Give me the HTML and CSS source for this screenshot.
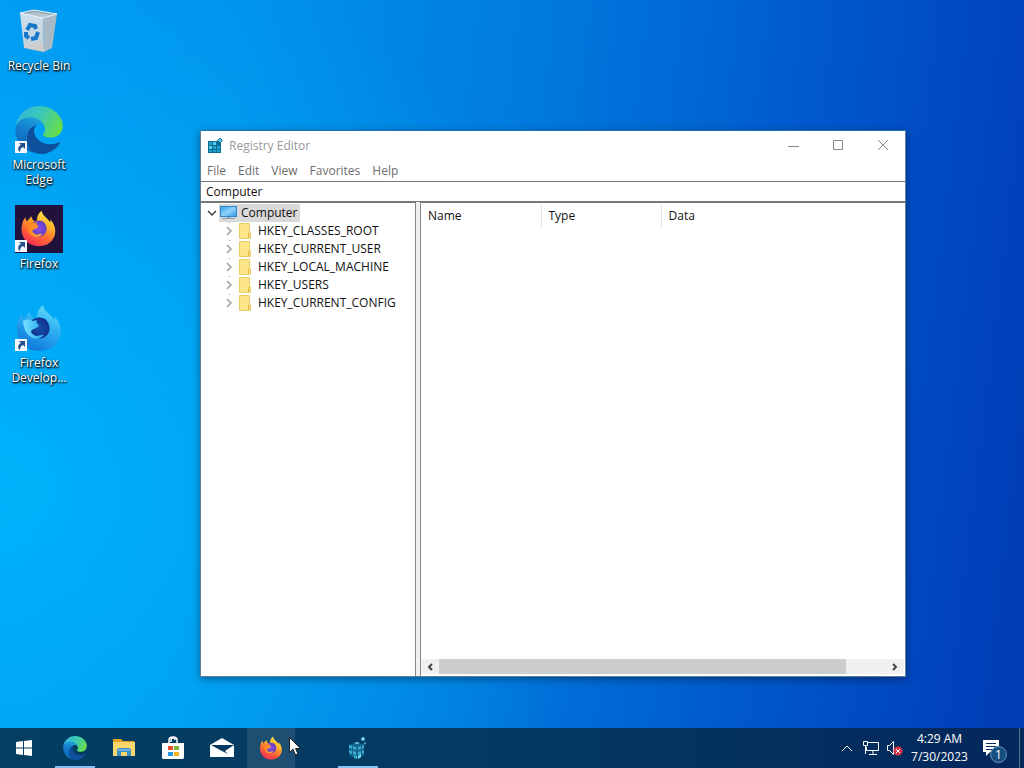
FILE: index.html
```
<!DOCTYPE html>
<html lang="en">

<head>
	<meta charset="UTF-8">
	<title>Desktop</title>
	<link rel="stylesheet" href="styles.css">
</head>

<body>
	<svg class="defs" aria-hidden="true">
		<defs>
			<linearGradient id="edgeDark" x1="0" x2="1"><stop offset="0" stop-color="#0c4f9c"/><stop offset="1" stop-color="#11519b"/></linearGradient>
			<linearGradient id="edgeMid" x1="0.6" y1="0" x2="0.3" y2="1"><stop offset="0" stop-color="#1ea6dc"/><stop offset="0.4" stop-color="#1580d0"/><stop offset="1" stop-color="#0d5dae"/></linearGradient>
			<linearGradient id="edgeTop" x1="0" y1="0.2" x2="1" y2="0.6"><stop offset="0" stop-color="#31b5e0"/><stop offset="0.5" stop-color="#3cc9b4"/><stop offset="1" stop-color="#67dd48"/></linearGradient>
			<linearGradient id="fire" x1="0.8" y1="0" x2="0.3" y2="1"><stop offset="0" stop-color="#fff04a"/><stop offset="0.35" stop-color="#ffb52c"/><stop offset="0.65" stop-color="#ff6b30"/><stop offset="1" stop-color="#f52a5b"/></linearGradient>
			<linearGradient id="fireHead" x1="0" y1="0" x2="1" y2="0.4"><stop offset="0" stop-color="#ff7a24"/><stop offset="1" stop-color="#ffa22c"/></linearGradient>
			<radialGradient id="globe"><stop offset="0" stop-color="#8a4be8"/><stop offset="1" stop-color="#6241c4"/></radialGradient>
			<linearGradient id="ice" x1="0.8" y1="0" x2="0.3" y2="1"><stop offset="0" stop-color="#6fe4fb"/><stop offset="0.4" stop-color="#30b2f2"/><stop offset="1" stop-color="#0d76dc"/></linearGradient>
			<linearGradient id="iceHead" x1="0" x2="1"><stop offset="0" stop-color="#77e2ff"/><stop offset="1" stop-color="#23a4ed"/></linearGradient>
			<radialGradient id="iceGlobe"><stop offset="0" stop-color="#164fae"/><stop offset="1" stop-color="#12308b"/></radialGradient>
			<linearGradient id="binFront" x1="0" y1="0" x2="0" y2="1"><stop offset="0" stop-color="#cfdfea"/><stop offset="0.7" stop-color="#c3d3e0"/><stop offset="1" stop-color="#d9c9c4"/></linearGradient>
			<linearGradient id="screen" x1="0" y1="0" x2="1" y2="1"><stop offset="0" stop-color="#3aa5ea"/><stop offset="0.5" stop-color="#8ed1fa"/><stop offset="1" stop-color="#3b9fe5"/></linearGradient>
		</defs>
		<symbol id="edge" viewBox="0 0 256 259">
			<path fill="url(#edgeMid)" d="M105.7 241.4a79.2 79.2 0 0 1-22.7-21.3 80.7 80.7 0 0 1 29.5-120c3.1-1.5 8.5-4 15.5-4a32.4 32.4 0 0 1 25.7 13 31.9 31.9 0 0 1 6.4 18.7c0-.2 24.4-79.6-80-79.6-43.9 0-80 41.6-80 78.2a130 130 0 0 0 12.1 56 128 128 0 0 0 156.4 67.1 75.6 75.6 0 0 1-62.8-8z"/>
			<path fill="url(#edgeDark)" d="M235.7 195.5a93.7 93.7 0 0 1-10.5 4.7 101.9 101.9 0 0 1-36 6.4c-47.3 0-88.5-32.5-88.5-74.3A31.5 31.5 0 0 1 117.1 105c-42.8 1.8-53.8 46.4-53.8 72.5 0 73.9 68.1 81.4 82.8 81.4 7.9 0 19.8-2.3 27-4.6l1.3-.4a128.3 128.3 0 0 0 66.6-52.8 4 4 0 0 0-5.3-5.6z"/>
			<path fill="url(#edgeTop)" d="M152.3 148.9c-.8 1-3.3 2.5-3.3 5.6 0 2.6 1.7 5.1 4.7 7.2 14.4 10 41.5 8.7 41.6 8.7a59.6 59.6 0 0 0 30.3-8.3A61.4 61.4 0 0 0 256 109.2c.3-22.4-8-37.3-11.3-43.9C223.5 23.8 177.7 0 128 0A128 128 0 0 0 0 126.2c.5-36.5 36.8-66 80-66 3.5 0 23.500.3 42 10 16.3 8.6 24.9 19 30.8 29.2 6.2 10.7 7.3 24.2 7.3 29.5s-2.7 13.4-7.8 20z"/>
		</symbol>
		<symbol id="fox" viewBox="0 0 48 48">
			<path class="flame" d="M28 1c1 5 4 7 7 10 2 2 3 3 4 5 1-1 1-2 0-4 6 6 8 14 6 21-3 9-11 14-21 14C11 47 2 37 2 25 2 18 4 13 7 9c0 3 1 4 2 6 2-3 4-5 6-7 0 3 2 6 5 7l2-2c0-5 2-9 6-12z"/>
			<path class="world" d="M16 17c4-4 12-5 16 0 4 6 3 12-1 15-4 4-12 3-15-1-3-5-3-10 0-14z"/>
			<path class="head" d="M8 17c4-2 7-2 10 0l4-1c-1 3 0 4 2 5-1 3-3 3-5 4-2 1-3 1-3 3 1 2 3 3 5 4 3 0 5-2 8-1-3 4-9 5-13 2-5-3-7-8-8-16z"/>
		</symbol>
		<symbol id="shortcut" viewBox="0 0 12 12">
			<path fill="#f4f8fc" d="M0 0h12v12H0z"/>
			<path fill="#24528f" d="M4 2h6v6L8 6C6 7 5 8 5 11 2 9 3 5 6 4z"/>
		</symbol>
		<symbol id="folder" viewBox="0 0 14 16">
			<path fill="#f9df7d" stroke="#ebcd66" d="M1.500.5h10v9h1v6h-11z"/>
			<path fill="#fde58c" d="M2 1h9v14H2z"/>
			<path fill="none" stroke="#dfb845" d="M10.500 10v5"/>
		</symbol>
		<symbol id="closed" viewBox="0 0 8 10">
			<path fill="none" stroke="#a0a0a0" stroke-width="1.500" d="M2 1l4 4-4 4"/>
		</symbol>
	</svg>

	<main class="desktop">
		<nav class="shortcuts" aria-label="Desktop icons">
			<a class="shortcut" href="#">
				<svg class="picture" viewBox="0 0 48 48">
					<path fill="#8da5b5" d="M5 6l14-3 23 4-4 4-10 1z"/>
					<path fill="#b4c5d1" d="M9 7l11-2 18 3-10 3z"/>
					<path fill="url(#binFront)" d="M5 6l23 5 1 34-20-4z"/>
					<path fill="#a9bac6" d="M28 11l14-4-5 34-8 4z"/>
					<path fill="none" stroke="#e9f4fa" d="M5 6l23 5 14-4-23-4z"/>
					<g fill="none" stroke="#1676cb" stroke-width="4">
						<path d="M12 23l3-5 5 1 1 3"/>
						<path d="M23 25l-2 6-5 1"/>
						<path d="M14 31l-3-2v-4"/>
					</g>
				</svg>
				<span>Recycle Bin</span>
			</a>
			<a class="shortcut" href="#">
				<svg class="picture" viewBox="0 0 48 48">
					<use href="#edge" width="48" height="48"/>
					<use href="#shortcut" y="35" width="12" height="12"/>
				</svg>
				<span>Microsoft Edge</span>
			</a>
			<a class="shortcut" href="#">
				<svg class="picture" viewBox="0 0 48 48">
					<path fill="#20123a" d="M0 0h48v48H0z"/>
					<use href="#fox" x="5" y="5" width="37" height="37"/>
					<use href="#shortcut" y="35" width="12" height="12"/>
				</svg>
				<span>Firefox</span>
			</a>
			<a class="shortcut" href="#">
				<svg class="picture developer" viewBox="0 0 48 48">
					<use href="#fox" width="48" height="48"/>
					<use href="#shortcut" y="35" width="12" height="12"/>
				</svg>
				<span>Firefox Develop...</span>
			</a>
		</nav>

		<section class="window" aria-label="Registry Editor">
			<header class="titlebar">
				<svg class="appIcon" viewBox="0 0 16 16">
					<path fill="#0b6c91" d="M1 3h11l2 2v10H1z"/>
					<path fill="#1fa3cf" d="M2 4h3v3H2zM6 4h3v3H6zM2 8h3v3H2zM6 8h3v3H6zM10 8h3v3h-3zM2 12h3v2H2zM6 12h3v2H6zM10 12h3v2h-3z"/>
					<path fill="#59cdea" d="M6 4h3v3H6zM2 8h3v3H2z"/>
					<path fill="#58cbe4" stroke="#0b6c91" d="M13 0l2.500 2.500L13 5l-2.500-2.500z"/>
				</svg>
				<h1>Registry Editor</h1>
				<button class="control" aria-label="Minimize"><svg viewBox="0 0 12 12"><path d="M1 6.500h11"/></svg></button>
				<button class="control" aria-label="Maximize"><svg viewBox="0 0 12 12"><path d="M1.500.5h9v9h-9z"/></svg></button>
				<button class="control" aria-label="Close"><svg viewBox="0 0 12 12"><path d="M1 0l10 10M11 0L1 10"/></svg></button>
			</header>
			<div class="menubar">
				<button>File</button>
				<button>Edit</button>
				<button>View</button>
				<button>Favorites</button>
				<button>Help</button>
			</div>
			<input class="address" type="text" value="Computer" aria-label="Address">
			<div class="panes">
				<div class="tree">
					<div class="root">
						<svg class="arrow" viewBox="0 0 10 8"><path fill="none" stroke="#404040" stroke-width="1.500" d="M1 2l4 4 4-4"/></svg>
						<a class="selected" href="#">
							<svg class="computer" viewBox="0 0 17 14">
								<path fill="#2c86c9" d="M0 0h17v11H0z"/>
								<path fill="url(#screen)" d="M1 1h15v9H1z"/>
								<path fill="#8fa3b1" d="M7 11h3v1h5v1H2v-1h5z"/>
							</svg>
							<span>Computer</span>
						</a>
					</div>
					<ul>
						<li><svg class="closed"><use href="#closed"/></svg><svg class="folder"><use href="#folder"/></svg>HKEY_CLASSES_ROOT</li>
						<li><svg class="closed"><use href="#closed"/></svg><svg class="folder"><use href="#folder"/></svg>HKEY_CURRENT_USER</li>
						<li><svg class="closed"><use href="#closed"/></svg><svg class="folder"><use href="#folder"/></svg>HKEY_LOCAL_MACHINE</li>
						<li><svg class="closed"><use href="#closed"/></svg><svg class="folder"><use href="#folder"/></svg>HKEY_USERS</li>
						<li><svg class="closed"><use href="#closed"/></svg><svg class="folder"><use href="#folder"/></svg>HKEY_CURRENT_CONFIG</li>
					</ul>
				</div>
				<div class="values">
					<table>
						<thead>
							<tr><th>Name</th><th>Type</th><th>Data</th></tr>
						</thead>
					</table>
					<div class="scrollbar">
						<button aria-label="Scroll left"><svg viewBox="0 0 8 8"><path d="M6 1L3 4l3 3"/></svg></button>
						<div class="track"><div class="thumb"></div></div>
						<button aria-label="Scroll right"><svg viewBox="0 0 8 8"><path d="M2 1l3 3-3 3"/></svg></button>
					</div>
				</div>
			</div>
		</section>
	</main>

	<footer class="taskbar">
		<button class="start" aria-label="Start">
			<svg width="16" height="16" viewBox="0 0 16 16"><path fill="#fff" d="M0 2l7-1v6.500H0zM8 1l8-1v7.500H8zM0 8.500h7V15l-7-1zM8 8.500h8V16l-8-1z"/></svg>
		</button>
		<div class="apps">
			<button class="running" aria-label="Microsoft Edge"><svg width="24" height="24"><use href="#edge"/></svg></button>
			<button aria-label="File Explorer">
				<svg width="22" height="20" viewBox="0 0 22 20">
					<path fill="#e3a11c" d="M0 1h8l2 2h11v5H0z"/>
					<path fill="#fbd66c" d="M0 4h22v14H0z"/>
					<path fill="#3f8cc5" d="M4 18v-7l2-1h10l2 1v7h-4v-4H8v4z"/>
					<path fill="#6eb3df" d="M5 11h12v2H5z"/>
				</svg>
			</button>
			<button aria-label="Microsoft Store">
				<svg width="24" height="24" viewBox="0 0 24 24">
					<path fill="none" stroke="#fff" stroke-width="1.500" d="M8 7V4c0-4 8-4 8 0v3M10 6V4c0-3 4-3 4 0"/>
					<path fill="#fff" d="M1 7h22v15l-1 1H2l-1-1z"/>
					<path fill="#e4512c" d="M7 10h5v4H7z"/>
					<path fill="#7eb834" d="M13 10h5v4h-5z"/>
					<path fill="#269bdc" d="M7 16h5v4H7z"/>
					<path fill="#f5b61b" d="M13 16h5v4h-5z"/>
				</svg>
			</button>
			<button aria-label="Mail">
				<svg width="24" height="20" viewBox="0 0 24 20">
					<path fill="#fff" d="M0 7l12-7 12 7v12H0z"/>
					<path fill="#063a63" d="M1 7h23l-9 6 3 3-8-4z"/>
				</svg>
			</button>
			<button class="hovered" aria-label="Firefox"><svg width="24" height="24"><use href="#fox"/></svg></button>
		</div>
		<div class="apps opened">
			<button class="running" aria-label="Registry Editor">
				<svg width="24" height="24" viewBox="0 0 24 24">
					<path fill="#16658a" d="M3 9l5-2 10 1v11l-7 4-8-4z"/>
					<path fill="#36abd3" d="M3 9l3 1v3l-3-1zM7 10l3 1v3l-3-1zM3 14l3 1v3l-3-1zM7 15l3 1v3l-3-1zM12 11l3-1v3l-3 1zM12 16l3-1v3l-3 1zM16 10l2-1v3l-2 1zM16 15l2-1v3l-2 1zM8 19l3 1v3l-3-1z"/>
					<path fill="#7cdcf2" d="M8 7l3-1 3 1-3 1zM12 20l3-2v3l-3 2zM15 2l3-1 1 3-3 1zM18 7l2-1-1 3z"/>
				</svg>
			</button>
		</div>
		<div class="tray">
			<button aria-label="Show hidden icons"><svg width="12" height="8" viewBox="0 0 12 8"><path d="M1 7l5-5 5 5"/></svg></button>
			<button aria-label="Network">
				<svg width="18" height="16" viewBox="0 0 18 16"><path d="M5 2.500h11.500v8H4.500V7M11 11v3M7 14.500h8M1.500 1.500h4v4h-4zM3.500 6v8"/></svg>
			</button>
			<button aria-label="Volume, muted">
				<svg width="18" height="16" viewBox="0 0 18 16">
					<path d="M1.500 5.500h2l4-4v13l-4-4h-2z"/>
					<circle cx="12" cy="11" r="4.500" fill="#d93445"/>
					<path d="M10 9l4 4M14 9l-4 4"/>
				</svg>
			</button>
			<button class="clock"><time>4:29 AM</time><time>7/30/2023</time></button>
			<button class="notifications" aria-label="Notifications">
				<svg width="18" height="18" viewBox="0 0 18 18"><path class="solid" d="M1 1h16v12H8l-4 4v-4H1z"/><path class="lines" d="M4 4.500h10M4 7.500h10M4 10.500h7"/></svg>
				<span class="badge">1</span>
			</button>
			<button class="peek" aria-label="Show desktop"></button>
		</div>
		<svg class="pointer" viewBox="0 0 12 19"><path fill="#fff" stroke="#222" d="M.5.5v15l3.500-3.500 2.500 6 2.500-1-2.500-5.500h5z"/></svg>
	</footer>
</body>

</html>
```
FILE: styles.css
```
* {
	box-sizing: border-box;
}
html, body {
	height: 100%;
}
body {
	margin: 0;
	display: flex;
	flex-direction: column;
	overflow: hidden;
	font-family: "Open Sans", "Noto Sans", sans-serif;
	font-size: 12px;
	line-height: 18px;
	color: #111;
	background:
		radial-gradient(ellipse 60% 75% at 0% 64%, rgba(0, 190, 255, 0.7), rgba(0, 170, 250, 0) 100%),
		linear-gradient(97deg, #0099f2 0%, #0093ec 22%, #007bdf 48%, #005bce 72%, #0043bd 92%, #003bb3 100%);
}
button {
	display: flex;
	align-items: center;
	justify-content: center;
	padding: 0;
	border: 0;
	background: none;
	color: inherit;
	font: inherit;
}
a {
	color: inherit;
	text-decoration: none;
}
.defs {
	position: absolute;
	width: 0;
	height: 0;
}
.flame {
	fill: var(--flame, url(#fire));
}
.world {
	fill: var(--world, url(#globe));
}
.head {
	fill: var(--head, url(#fireHead));
}
.developer {
	--flame: url(#ice);
	--world: url(#iceGlobe);
	--head: url(#iceHead);
}

/* desktop */
.desktop {
	flex: 1;
	position: relative;
	min-height: 0;
}
.shortcuts {
	width: 78px;
	padding-top: 7px;
}
.shortcut {
	display: flex;
	flex-direction: column;
	align-items: center;
	gap: 3px;
	height: 99px;
	padding: 0 8px;
	color: #fff;
	line-height: 15px;
	text-align: center;
	text-shadow: 0 1px 2px #000, 1px 1px 2px #000;
}
.shortcut span {
	margin: 0 -8px;
}
.picture {
	flex: none;
	width: 48px;
	height: 48px;
}

/* window */
.window {
	position: absolute;
	top: 130px;
	right: 118px;
	bottom: 51px;
	left: 200px;
	display: flex;
	flex-direction: column;
	border: 1px solid #5f7f98;
	border-top-color: #1a72b8;
	background: #fff;
	box-shadow: 0 2px 8px rgba(0, 0, 0, 0.4);
}
.titlebar {
	display: flex;
	align-items: center;
	height: 30px;
	padding-left: 6px;
	color: #999;
}
.titlebar h1 {
	flex: 1;
	margin: 0 0 0 6px;
	font-size: 12px;
	font-weight: 400;
}
.appIcon {
	width: 16px;
	height: 16px;
}
.control {
	width: 45px;
	height: 30px;
}
.control svg {
	width: 12px;
	height: 12px;
	fill: none;
	stroke: #888;
}
.menubar {
	display: flex;
	gap: 12px;
	height: 20px;
	padding-left: 6px;
	color: #6d6d6d;
}
.address {
	height: 21px;
	padding: 0 5px;
	border: 0;
	border-top: 1px solid #777;
	border-bottom: 1px solid #777;
	outline: 0;
	background: #fff;
	color: #111;
	font: inherit;
}
.panes {
	flex: 1;
	display: flex;
	gap: 4px;
	min-height: 0;
	background: #f0f0f0;
}
.tree {
	width: 215px;
	padding-top: 1px;
	border-top: 1px solid #777;
	border-right: 1px solid #828790;
	background: #fff;
}
.root {
	display: flex;
	align-items: center;
	gap: 2px;
	height: 18px;
	padding-left: 6px;
}
.arrow {
	width: 10px;
	height: 8px;
}
.selected {
	display: flex;
	align-items: center;
	gap: 4px;
	padding: 0 2px 0 1px;
	background: #d9d9d9;
}
.computer {
	width: 17px;
	height: 14px;
}
.tree ul {
	margin: 0;
	padding: 0 0 0 24px;
	list-style: none;
}
.tree li {
	display: flex;
	align-items: center;
	height: 18px;
	background: linear-gradient(#999, #999) 4px 0 / 1px 1px no-repeat;
}
.closed {
	width: 8px;
	height: 10px;
	margin-right: 5px;
}
.folder {
	width: 14px;
	height: 16px;
	margin-right: 6px;
}
.values {
	flex: 1;
	display: flex;
	flex-direction: column;
	justify-content: space-between;
	padding: 1px 1px 2px 0;
	border-top: 1px solid #777;
	border-left: 1px solid #828790;
	background: #fff;
}
.values table {
	width: 100%;
	table-layout: fixed;
	border-collapse: collapse;
}
.values th {
	height: 24px;
	padding: 0 7px;
	font-weight: 400;
	text-align: left;
}
.values th:not(:last-child) {
	width: 120px;
	border-right: 1px solid #e5e5e5;
}
.scrollbar {
	display: flex;
	height: 15px;
	background: #f0f0f0;
}
.scrollbar button {
	width: 18px;
}
.scrollbar svg {
	width: 8px;
	height: 8px;
	fill: none;
	stroke: #444;
	stroke-width: 2;
}
.track {
	flex: 1;
}
.thumb {
	width: 91%;
	height: 100%;
	background: #cdcdcd;
}

/* taskbar */
.taskbar {
	position: relative;
	display: flex;
	height: 40px;
	background: linear-gradient(90deg, #043e62, #043963 50%, #04275c);
	color: #fff;
}
.start {
	width: 48px;
	margin-right: 3px;
}
.apps {
	display: flex;
	gap: 1px;
}
.apps button {
	position: relative;
	width: 48px;
}
.opened {
	margin-left: 39px;
}
.hovered {
	background: #1f4e73;
}
.running::after {
	content: "";
	position: absolute;
	bottom: 0;
	left: 4px;
	right: 4px;
	height: 2px;
	background: #83c2f2;
}
.tray {
	display: flex;
	margin-left: auto;
}
.tray > button {
	width: 24px;
}
.tray svg {
	fill: none;
	stroke: #fff;
}
.tray circle {
	stroke: none;
}
.tray > .clock {
	flex-direction: column;
	width: 65px;
}
.tray > .notifications {
	position: relative;
	width: 47px;
	padding-right: 9px;
}
.tray .solid {
	fill: #fff;
	stroke: none;
}
.tray .lines {
	stroke: #04275c;
}
.badge {
	position: absolute;
	top: 18px;
	left: 18px;
	width: 17px;
	height: 17px;
	border: 1px solid #6c93b8;
	border-radius: 50%;
	background: #17507f;
	line-height: 15px;
	text-align: center;
}
.tray > .peek {
	width: 5px;
	border-left: 1px solid #56718f;
}
.pointer {
	position: absolute;
	top: 9px;
	left: 289px;
	width: 12px;
	height: 19px;
}
```
